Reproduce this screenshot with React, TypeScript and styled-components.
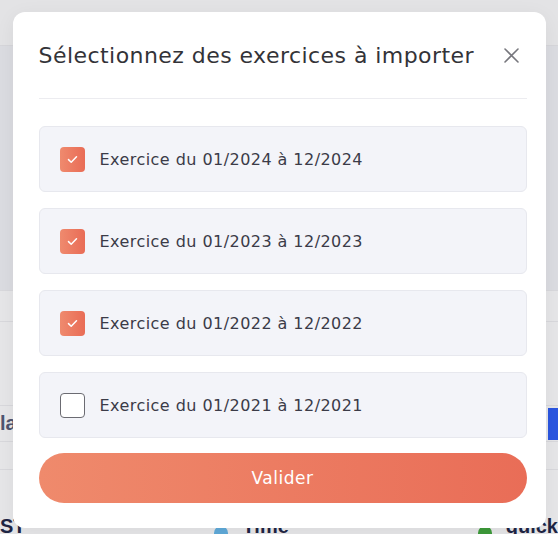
import { useState } from 'react';
import styled, { createGlobalStyle } from 'styled-components';

const GlobalStyle = createGlobalStyle`
  html, body {
    margin: 0;
    padding: 0;
    height: 100%;
    background: #e4e4e6;
    font-family: "DejaVu Sans", "Noto Sans", sans-serif;
  }
  #root { height: 100%; }
`;

/* ---- faded page behind the dialog ---- */

const Page = styled.div`
  position: relative;
  height: 534px;
  overflow: hidden;
  display: flex;
  flex-direction: column;
  background: #e6e6e8;
`;

const PageTop = styled.div`
  height: 45px;
  background: #e3e3e5;
  border-bottom: 1px solid #d6d6da;
`;

const PagePanel = styled.div`
  height: 244px;
  background: #dbdce1;
`;

const PageRow = styled.div<{ $h: number }>`
  height: ${({ $h }) => $h}px;
  display: flex;
  align-items: center;
  justify-content: space-between;
  border-top: 1px solid #d8d8dc;
  font-family: "Liberation Sans", sans-serif;
  font-weight: 700;
  font-size: 20px;
  color: #4f5570;
`;

const Badge = styled.span`
  width: 10px;
  height: 32px;
  background: #2a55e0;
`;

const PageFooter = styled.div`
  flex: 1;
  display: flex;
  align-items: flex-end;
  justify-content: space-between;
  border-top: 1px solid #d8d8dc;
  font-family: "Liberation Sans", sans-serif;
  font-weight: 700;
  font-size: 20px;
  color: #1e2544;
  line-height: 16px;
`;

const FooterBrand = styled.span`
  display: flex;
  align-items: flex-end;
  gap: 14px;
`;

const BrandMark = styled.span<{ $color: string }>`
  width: 14px;
  height: 8px;
  border-radius: 7px 7px 0 0;
  background: ${({ $color }) => $color};
`;

const Overlay = styled.div`
  position: absolute;
  inset: 0;
  display: flex;
  justify-content: center;
  align-items: flex-start;
  padding-top: 12px;
`;

/* ---- dialog ---- */

const Dialog = styled.div`
  width: 533px;
  height: 516px;
  box-sizing: border-box;
  background: #ffffff;
  border-radius: 12px;
  padding: 26px 19px 25px 26px;
  display: flex;
  flex-direction: column;
  box-shadow: 0 4px 20px rgba(0, 0, 0, 0.06);
`;

const Head = styled.div`
  display: flex;
  align-items: center;
  justify-content: space-between;
  height: 34px;
  padding-bottom: 26px;
  border-bottom: 1px solid #ececf0;
`;

const Title = styled.h2`
  margin: 0;
  font-size: 22px;
  font-weight: 400;
  letter-spacing: 0.45px;
  color: #333338;
`;

const CloseButton = styled.button`
  width: 22px;
  height: 22px;
  margin-right: 4px;
  padding: 0;
  border: 0;
  background: transparent;
  display: flex;
  align-items: center;
  justify-content: center;
  color: #77777d;
  cursor: pointer;
`;

const List = styled.div`
  display: flex;
  flex-direction: column;
  gap: 16px;
  margin-top: 27px;
`;

const Card = styled.label`
  height: 66px;
  box-sizing: border-box;
  display: flex;
  align-items: center;
  gap: 15px;
  padding: 0 20px;
  background: #f3f4f9;
  border: 1px solid #e7e8ee;
  border-radius: 6px;
  cursor: pointer;
`;

const Box = styled.span<{ $checked: boolean }>`
  width: 25px;
  height: 25px;
  box-sizing: border-box;
  border-radius: 4px;
  display: flex;
  align-items: center;
  justify-content: center;
  background: ${({ $checked }) =>
    $checked ? 'linear-gradient(90deg, #ef8a6e, #e96c56)' : '#ffffff'};
  border: ${({ $checked }) => ($checked ? '0' : '1.5px solid #6b6b72')};
`;

const CardText = styled.span`
  font-size: 16px;
  letter-spacing: 0.45px;
  color: #3b3b48;
`;

const Submit = styled.button`
  margin-top: 15px;
  height: 50px;
  border: 0;
  border-radius: 25px;
  background: linear-gradient(90deg, #ef8a6c, #e96d57);
  color: #ffffff;
  font-family: "DejaVu Sans", "Noto Sans", sans-serif;
  font-size: 17px;
  font-weight: 400;
  letter-spacing: 0.5px;
  cursor: pointer;
`;

const periods = ['2024', '2023', '2022', '2021'];

export default function App() {
  const [checked, setChecked] = useState<Record<string, boolean>>({
    '2024': true,
    '2023': true,
    '2022': true,
    '2021': false,
  });

  return (
    <>
      <GlobalStyle />
      <Page>
        <PageTop />
        <PagePanel />
        <PageRow $h={30} />
        <PageRow $h={83} />
        <PageRow $h={35}>
          <span>la</span>
          <Badge />
        </PageRow>
        <PageRow $h={27} />
        <PageFooter>
          <span>ST</span>
          <FooterBrand>
            <BrandMark $color="#5fa9d8" />
            <span>Time</span>
          </FooterBrand>
          <FooterBrand>
            <BrandMark $color="#3d9a3a" />
            <span>quick</span>
          </FooterBrand>
        </PageFooter>
        <Overlay>
          <Dialog>
            <Head>
              <Title>Sélectionnez des exercices à importer</Title>
              <CloseButton aria-label="Fermer">
                <svg width="15" height="15" viewBox="0 0 15 15" fill="none">
                  <path d="M1 1L14 14M14 1L1 14" stroke="currentColor" strokeWidth="1.6" strokeLinecap="round" />
                </svg>
              </CloseButton>
            </Head>
            <List>
              {periods.map((y) => (
                <Card key={y} onClick={() => setChecked((c) => ({ ...c, [y]: !c[y] }))}>
                  <Box $checked={checked[y]}>
                    {checked[y] && (
                      <svg width="11" height="9" viewBox="0 0 11 9" fill="none">
                        <path d="M1.5 4.6L4.2 7.2L9.5 1.8" stroke="#fff" strokeWidth="1.5" strokeLinecap="round" strokeLinejoin="round" />
                      </svg>
                    )}
                  </Box>
                  <CardText>
                    Exercice du 01/{y} à 12/{y}
                  </CardText>
                </Card>
              ))}
            </List>
            <Submit type="button">Valider</Submit>
          </Dialog>
        </Overlay>
      </Page>
    </>
  );
}
